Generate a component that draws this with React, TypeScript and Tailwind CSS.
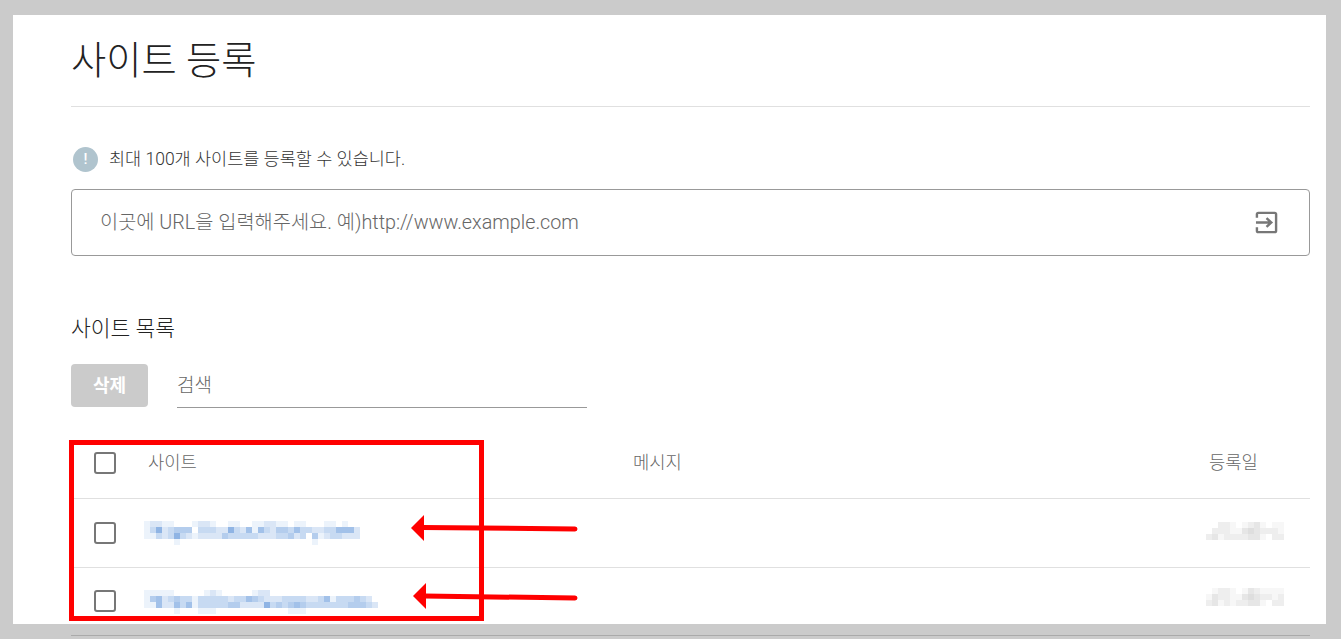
import React from 'react';

// pixelated site urls, one string per mosaic row, 0 = white .. 9 = full tint
const site1 = [
  '122110001221001100112211011000110100',
  '136234440333226325153244353322335552',
  '113236321222243333322233423041233222',
  '000001000000000000000000000010000000',
];
const site2 = [
  '111110000012100000122000000000000000000',
  '145234331333332335432223333223513334320',
  '115225351333334422226343454333333344432',
  '000001000111000000000000111000000000000',
];
const date1 = ['0022101231011', '0222113432221', '2312222331022'];
const date2 = ['0122101321111', '1322113432212', '2312122331022'];

const mix = (from: number[], to: number[], v: number) =>
  `rgb(${from.map((c, i) => Math.round(c + (to[i] - c) * v)).join(',')})`;

const Mosaic = ({ rows, tint, className }: { rows: string[]; tint: number[]; className?: string }) => (
  <svg
    width={Math.max(...rows.map((r) => r.length)) * 6}
    height={rows.length * 6}
    shapeRendering="crispEdges"
    className={className}
  >
    {rows.map((row, y) =>
      row.split('').map((c, x) => (
        <rect key={`${x}-${y}`} x={x * 6} y={y * 6} width={6} height={6} fill={mix([255, 255, 255], tint, Number(c) / 6)} />
      )),
    )}
  </svg>
);

const Check = () => <div className="w-[22px] h-[22px] border-[2.5px] border-[#777] rounded-[3px] shrink-0" />;

const BLUE = [143, 180, 228];
const GREY = [205, 205, 205];

export default function App() {
  return (
    <div className="relative h-[639px] w-[1341px] overflow-hidden bg-[#cbcbcb] font-['Roboto','Noto_Sans_CJK_KR',sans-serif]">
      <div className="h-[15px]" />
      <div className="ml-[13px] w-[1313px] h-[609px] bg-white pl-[58px] pr-[16px] overflow-hidden">
        {/* Page title */}
        <div className="h-[92px] border-b border-[#e0e0e0] flex items-center">
          <h1 className="text-[38.3px] font-light text-[#222] leading-none mt-[2px]">사이트 등록</h1>
        </div>

        {/* Notice */}
        <div className="mt-[40px] h-[24px] flex items-center gap-[11px] pl-[2px]">
          <div className="w-[25px] h-[25px] rounded-full bg-[#b0c4ce] flex items-center justify-center text-white text-[15px] font-medium">!</div>
          <span className="text-[17.5px] font-light text-[#333] mt-[1px]">최대 100개 사이트를 등록할 수 있습니다.</span>
        </div>

        {/* URL input */}
        <div className="mt-[18px] h-[67px] border border-[#999] rounded-[4px] flex items-center pl-[28px] pr-[31px]">
          <input
            readOnly
            placeholder="이곳에 URL을 입력해주세요. 예)http://www.example.com"
            className="flex-1 outline-none text-[19.75px] font-light placeholder:text-[#666]"
          />
          <svg width="23" height="23" viewBox="0 0 24 24" fill="none" stroke="#777" strokeWidth="2.5">
            <path d="M2 7V3.5A1.5 1.5 0 0 1 3.5 2h17A1.5 1.5 0 0 1 22 3.5v17a1.5 1.5 0 0 1-1.5 1.5h-17A1.5 1.5 0 0 1 2 20.5V17" />
            <path d="M1 12h15M12 7.5l5 4.5-5 4.5" />
          </svg>
        </div>

        {/* List */}
        <h2 className="mt-[58px] h-[30px] leading-[30px] text-[21.5px] font-light text-[#222]">사이트 목록</h2>
        <div className="mt-[20px] flex gap-[29px] h-[44px]">
          <button className="w-[77px] h-[43px] rounded-[4px] bg-[#cbcbcb] text-white text-[18px] font-bold">삭제</button>
          <div className="w-[410px] border-b border-[#999] h-[44px] text-[19px] font-light text-[#666] leading-[44px]">검색</div>
        </div>

        {/* Table */}
        <div className="mt-[20px] h-[71px] border-b border-[#e0e0e0] flex items-center text-[17.7px] font-light text-[#666]">
          <div className="w-[77px] pl-[23px] shrink-0"><Check /></div>
          <div className="w-[485px] shrink-0 mt-[1px]">사이트</div>
          <div className="flex-1 mt-[1px]">메시지</div>
          <div className="w-[101px] shrink-0 mt-[1px]">등록일</div>
        </div>
        <div className="h-[69px] border-b border-[#e0e0e0] flex items-center">
          <div className="w-[73px] pl-[23px] shrink-0"><Check /></div>
          <Mosaic rows={site1} tint={BLUE} />
          <div className="flex-1" />
          <Mosaic rows={date1} tint={GREY} className="mr-[26px] -mt-[4px]" />
        </div>
        <div className="h-[68px] flex items-start pt-[22px]">
          <div className="w-[73px] pl-[23px] shrink-0"><Check /></div>
          <Mosaic rows={site2} tint={BLUE} />
          <div className="flex-1" />
          <Mosaic rows={date2} tint={GREY} className="mr-[26px] -mt-[2px]" />
        </div>
      </div>
      <div className="mt-[11px] ml-[71px] w-[1239px] h-px bg-[#aaa]" />

      {/* Annotation box and arrows drawn over the screenshot */}
      <div className="absolute left-[69px] top-[440px] w-[415px] h-[181px] border-[5px] border-[#ff0000]" />
      <svg className="absolute left-0 top-0" width="1341" height="639" fill="none">
        <path d="M575 529 L422 527.5" stroke="#ff0000" strokeWidth="5" strokeLinecap="round" />
        <path d="M411 528 L424 515 V541 Z" fill="#ff0000" />
        <path d="M575 598 L424 596" stroke="#ff0000" strokeWidth="5" strokeLinecap="round" />
        <path d="M413 596 L426 583 V609 Z" fill="#ff0000" />
      </svg>
    </div>
  );
}
